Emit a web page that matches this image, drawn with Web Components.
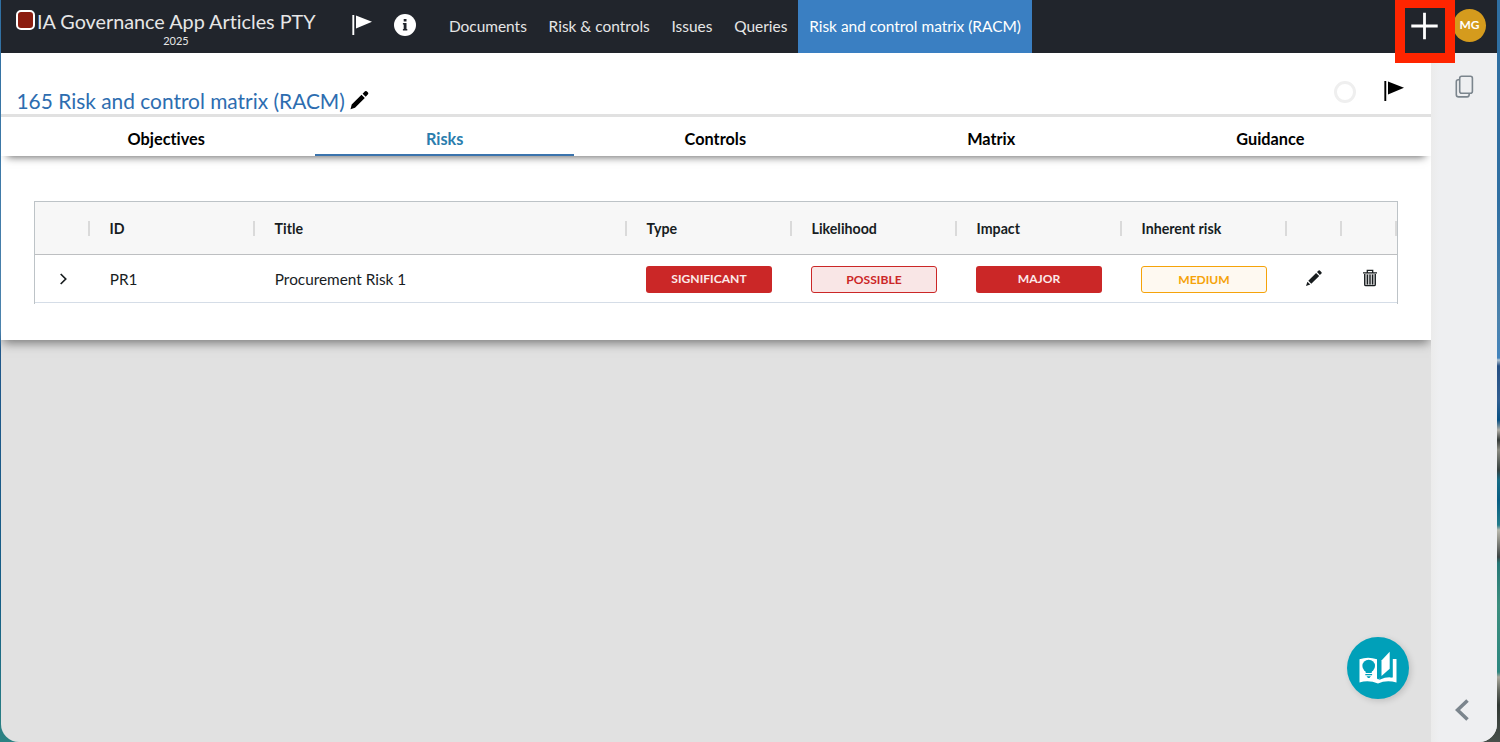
<!DOCTYPE html>
<html lang="en">
<head>
<meta charset="utf-8">
<title>Risk and control matrix (RACM)</title>
<style>
    body {
        margin: 0;
        height: 742px;
        overflow: hidden;
        font-family: Lato, "Liberation Sans", sans-serif;
        font-size: 16px;
        font-variant-ligatures: none;
        color: #181d1f;
    }
</style>
</head>
<body>
<app-window>
    <top-bar slot="header" name="IA Governance App Articles PTY" year="2025" user="MG">
        <nav-item>Documents</nav-item>
        <nav-item>Risk &amp; controls</nav-item>
        <nav-item>Issues</nav-item>
        <nav-item>Queries</nav-item>
        <nav-item active>Risk and control matrix (RACM)</nav-item>
    </top-bar>
    <doc-panel heading="165 Risk and control matrix (RACM)">
        <tab-item slot="tabs">Objectives</tab-item>
        <tab-item slot="tabs" active>Risks</tab-item>
        <tab-item slot="tabs">Controls</tab-item>
        <tab-item slot="tabs">Matrix</tab-item>
        <tab-item slot="tabs">Guidance</tab-item>
        <risk-table></risk-table>
    </doc-panel>
    <help-button slot="help"></help-button>
    <side-bar slot="side"></side-bar>
</app-window>

<script>
const icons = {
    flag: `<svg width="22" height="22" viewBox="0 0 22 22"><path d="M2.3 1v20" stroke="currentColor" stroke-width="1.9"/><path d="M5 1.5 21 7.8 5 14.5z" fill="currentColor"/></svg>`,
    info: `<svg width="22" height="22" viewBox="0 0 22 22"><circle cx="11" cy="11" r="11" fill="#fff"/><path d="M9.7 5h2.8v2.6H9.7zM8.9 9h3.6v6h.8v1.6H8.9V15h.8v-4.4h-.8z" fill="#21252c"/></svg>`,
    plus: `<svg width="28" height="28" viewBox="0 0 28 28"><path d="M13.500 .8v26.400M.3 14h26.400" stroke="#fff" stroke-width="2.800"/></svg>`,
    pen: `<svg width="19" height="20" viewBox="0 0 19 20"><path d="M.5 19.300 1.700 14.500 11.500 4.800l3.300 3.200L5 17.700zM12.600 3.700 15 1.300q.9-.7 1.700 0l1.300 1.300q.7.900 0 1.700L15.700 6.700z" fill="currentColor"/></svg>`,
    pencil: `<svg width="18" height="18" viewBox="0 0 18 18"><path d="M1 17 2.400 12.700 5.300 15.600zM3.300 11.800 11.100 4l3.100 3.100-7.900 7.700zM12 3.100l1.600-1.600q.6-.5 1.200 0l1.700 1.700q.5.600 0 1.200l-1.600 1.600z" fill="currentColor"/></svg>`,
    trash: `<svg width="16" height="18" viewBox="0 0 16 18"><path d="M2.5 4.500h11v12.200h-11z" fill="#d0d1d2"/><path d="M1 3.800h14M5.300 3.600V1.300h5.400v2.300M2.700 5v10.400q0 1.300 1.200 1.300h8.200q1.200 0 1.200-1.300V5M5.400 5.500v10M8 5.500v10M10.600 5.500v10" fill="none" stroke="currentColor" stroke-width="1.300"/></svg>`,
    right: `<svg width="9" height="12" viewBox="0 0 9 12"><path d="m1.700 1 5 5-5 5" fill="none" stroke="currentColor" stroke-width="1.700"/></svg>`,
    left: `<svg width="14" height="22" viewBox="0 0 14 22"><path d="M12.500 1.500 2.500 11l10 9.500" fill="none" stroke="#7b858d" stroke-width="3.600"/></svg>`,
    copy: `<svg width="20" height="24" viewBox="0 0 20 24"><rect x="4.700" y="1.300" width="12.700" height="17" rx="2" fill="none" stroke="#7b858d" stroke-width="1.600"/><path d="M4.700 4.800H3.300Q1.300 4.800 1.300 6.700v12.800q0 2.400 2.400 2.400h8.400q2.200 0 2.200-3.400" fill="none" stroke="#7b858d" stroke-width="1.600"/></svg>`,
    book: `<svg width="38" height="34" viewBox="0 0 38 34"><path d="M.5 8.200Q9 5.200 18 8.200V27.500l1.200 1 1.300-1V27q6-2 12.300-.6V8H37.500v23.400Q27 28.500 19 32.600 10 28.500.5 31.400z" fill="#fff"/><path d="M20.300 7.500h13.500v18.900q-7-.9-12 1.800l-1.500.8z" fill="#00a0b9"/><path d="M22.500 9.500 30.700.8v17L22.500 25z" fill="#fff"/><path d="M35 8v19.500" stroke="#fff" stroke-width="1.400"/><circle cx="9.700" cy="15" r="6.300" fill="#00a0b9"/><path d="M6.700 19h6v3h-6zM6.300 23h6.800v1.300H6.300zM7.500 25.200h4.400L10.500 27H9z" fill="#00a0b9"/></svg>`
};

class AppWindow extends HTMLElement {
    constructor() {
        super();
        this.attachShadow({mode: "open"}).innerHTML = `
        <style>
            :host {
                display: block;
                box-sizing: border-box;
                height: 742px;
                padding: 0 3px 0 1px;
                background:
                    linear-gradient(#2f6fa2 0, #2f6fa2 200px, #4c83ad 320px, #4384bd 358px, #b7c7d3 360px, #254f83 366px, #305e91 400px, #075083 420px, #b2afa7 430px, #343a38 440px, #8c8c83 450px, #35403f 470px, #176c85 480px, #075d83 500px, #237c8b 525px, #b9b8ad 530px, #8e8f87 540px, #3c4343 557px, #277776 563px, #3c8e7e 605px, #2d8780 672px, #aaa89d 677px, #646961 690px, #303733 705px, #48504b) right / 20px 100% no-repeat,
                    linear-gradient(#2f6fa2 0, #4c83ad 330px, #20578a 350px, #155e86 600px, #2c8383 742px);
            }
            .window {
                display: grid;
                grid-template: 53px 1fr / 1fr 66px;
                height: 742px;
                border-radius: 0 0 18px 18px;
                overflow: hidden;
                background: #e1e1e1;
            }
            .header { grid-column: 1 / 3; position: relative; z-index: 2; }
            main { position: relative; overflow: hidden; }
            .help { position: absolute; right: 22px; bottom: 43px; }
        </style>
        <div class="window">
            <div class="header"><slot name="header"></slot></div>
            <main><slot></slot><div class="help"><slot name="help"></slot></div></main>
            <slot name="side"></slot>
        </div>`;
    }
}

class TopBar extends HTMLElement {
    constructor() {
        super();
        this.attachShadow({mode: "open"});
    }

    connectedCallback() {
        this.shadowRoot.innerHTML = `
        <style>
            * { box-sizing: border-box; }
            :host {
                display: flex;
                height: 53px;
                background: #21252c;
                color: #e6e6e6;
            }
            svg { display: block; }
            .brand { width: 301px; margin-left: 15px; padding-top: 8px; }
            .name { display: flex; font-size: 19.8px; line-height: 26px; white-space: nowrap; }
            .mark {
                flex: none;
                width: 19px;
                height: 20px;
                margin: 2px 2px 0 0;
                border: 2px solid #fff;
                border-radius: 5px;
                background: #8b1d10;
            }
            .year { width: 320px; text-align: center; font-size: 11px; line-height: 13px; }
            .flag { margin: 14px 0 0 34px; color: #fff; }
            .info { margin: 14px 0 0 21px; }
            nav { display: flex; margin-left: 22px; }
            .end { display: flex; margin-left: auto; }
            .add {
                display: flex;
                justify-content: center;
                width: 60px;
                height: 63px;
                padding-top: 4px;
                border: 10px solid #ff2500;
                border-top-width: 8px;
                z-index: 1;
            }
            .user {
                width: 33px;
                height: 33px;
                margin: 9px 11px 0 -2px;
                border-radius: 50%;
                background: #d59b1d;
                color: #fff;
                font-size: 12px;
                font-weight: 700;
                line-height: 32px;
                text-align: center;
            }
        </style>
        <div class="brand">
            <div class="name"><span class="mark"></span>${this.getAttribute("name")}</div>
            <div class="year">${this.getAttribute("year")}</div>
        </div>
        <div class="flag">${icons.flag}</div>
        <div class="info">${icons.info}</div>
        <nav><slot></slot></nav>
        <div class="end">
            <div class="add">${icons.plus}</div>
            <div class="user">${this.getAttribute("user")}</div>
        </div>`;
    }
}

class NavItem extends HTMLElement {
    constructor() {
        super();
        this.attachShadow({mode: "open"}).innerHTML = `
        <style>
            :host {
                display: block;
                height: 53px;
                padding: 0 10.9px;
                font-size: 15.450px;
                line-height: 52px;
                white-space: nowrap;
            }
            :host([active]) { background: #3a7fc2; color: #fff; }
        </style>
        <slot></slot>`;
    }
}

class DocPanel extends HTMLElement {
    constructor() {
        super();
        this.attachShadow({mode: "open"});
    }

    connectedCallback() {
        this.shadowRoot.innerHTML = `
        <style>
            * { box-sizing: border-box; }
            :host {
                display: block;
                height: 287px;
                background: #fff;
                box-shadow: 0 5px 10px -2px #777;
            }
            svg { display: block; }
            .title {
                display: flex;
                height: 64px;
                padding-left: 15.5px;
                border-bottom: 3px solid #e1e1e1;
            }
            .heading {
                padding-top: 35px;
                color: #2d6db0;
                font-size: 20.9px;
                line-height: 26px;
                white-space: nowrap;
            }
            .pen { margin: 37px 0 0 5px; color: #000; }
            .state {
                width: 22px;
                height: 22px;
                margin: 28px 0 0 auto;
                border: 3px solid #efefef;
                border-radius: 50%;
            }
            .flag { margin: 27px 26px 0 27px; color: #000; }
            .tabs { display: flex; height: 39px; padding: 0 16px; }
            .bar { box-shadow: 0 7px 8px -6px #666; }
            .content { padding: 45px 33px 0; }
        </style>
        <div class="title">
            <div class="heading">${this.getAttribute("heading")}</div>
            <div class="pen">${icons.pen}</div>
            <div class="state"></div>
            <div class="flag">${icons.flag}</div>
        </div>
        <div class="bar"><div class="tabs"><slot name="tabs"></slot></div></div>
        <div class="content"><slot></slot></div>`;
    }
}

class TabItem extends HTMLElement {
    constructor() {
        super();
        this.attachShadow({mode: "open"}).innerHTML = `
        <style>
            :host {
                display: block;
                box-sizing: border-box;
                flex: 1 1 auto;
                height: 39px;
                color: #000;
                font-size: 16.3px;
                font-weight: 700;
                line-height: 44px;
                text-align: center;
            }
            :host([active]) { color: #2a7dad; border-bottom: 2px solid #3b74ad; }
        </style>
        <slot></slot>`;
    }
}

class RiskBadge extends HTMLElement {
    constructor() {
        super();
        this.attachShadow({mode: "open"}).innerHTML = `
        <style>
            :host {
                display: block;
                box-sizing: border-box;
                width: 126px;
                height: 27px;
                border-radius: 3px;
                font-size: 12.1px;
                font-weight: 700;
                line-height: 26px;
                text-align: center;
                background: #cb2727;
                color: #fbe9e9;
            }
            :host([kind="possible"]) { border: 1px solid #cb2727; background: #f9e6e6; color: #cb2727; }
            :host([kind="medium"]) { border: 1px solid #f5a30a; background: #fef9f1; color: #f5a30a; }
        </style>
        <slot></slot>`;
    }
}

class RiskTable extends HTMLElement {
    constructor() {
        super();
        this.shadowDOM = this.attachShadow({mode: "open"});
        this.columns = ["", "ID", "Title", "Type", "Likelihood", "Impact", "Inherent risk", "", ""];
        this.render();
    }

    render() {
        this.shadowDOM.innerHTML = `
        <style>
            * { box-sizing: border-box; }
            :host {
                display: block;
                box-sizing: border-box;
                height: 103px;
                border: 1px solid #bdc3c7;
                border-bottom: 0;
            }
            svg { display: block; }
            .row {
                display: grid;
                grid-template-columns: 55px 165px 372px repeat(4, 165px) 55px 55px;
                align-items: center;
                overflow: hidden;
            }
            .head {
                height: 53px;
                background: #f7f7f7;
                border-bottom: 1px solid #bdbfc1;
                font-size: 14.2px;
                font-weight: 700;
            }
            .head div {
                height: 15px;
                padding-left: 19.6px;
                border-right: 2px solid #dadada;
                line-height: 16px;
            }
            .body { height: 48px; border-bottom: 1px solid #d5dde7; font-size: 15.350px; }
            .body div { padding-left: 19.8px; line-height: 20px; }
            .body risk-badge { margin: 1px 0 0 19px; }
            .body .open { padding-left: 24px; }
            .body .edit { padding: 0 0 2px 18px; }
            .body .delete { padding: 0 0 2px 20px; }
        </style>
        <div class="row head">${this.columns.map(c => `<div>${c}</div>`).join("")}</div>
        <div class="row body">
            <div class="open">${icons.right}</div>
            <div>PR1</div>
            <div>Procurement Risk 1</div>
            <risk-badge>SIGNIFICANT</risk-badge>
            <risk-badge kind="possible">POSSIBLE</risk-badge>
            <risk-badge>MAJOR</risk-badge>
            <risk-badge kind="medium">MEDIUM</risk-badge>
            <div class="edit">${icons.pencil}</div>
            <div class="delete">${icons.trash}</div>
        </div>`;
    }
}

class HelpButton extends HTMLElement {
    constructor() {
        super();
        this.attachShadow({mode: "open"}).innerHTML = `
        <style>
            :host {
                display: flex;
                align-items: center;
                justify-content: center;
                width: 62px;
                height: 62px;
                border-radius: 50%;
                background: #00a0b9;
                box-shadow: 2px 2px 6px rgba(0, 0, 0, .15);
            }
        </style>
        ${icons.book}`;
    }
}

class SideBar extends HTMLElement {
    constructor() {
        super();
        this.attachShadow({mode: "open"}).innerHTML = `
        <style>
            :host {
                display: flex;
                box-sizing: border-box;
                flex-direction: column;
                justify-content: space-between;
                padding: 22px 0 21px 24px;
                background: linear-gradient(90deg, #ebebeb, #eeeff1 8px);
            }
            svg { display: block; }
        </style>
        ${icons.copy}${icons.left}`;
    }
}

customElements.define("app-window", AppWindow);
customElements.define("top-bar", TopBar);
customElements.define("nav-item", NavItem);
customElements.define("doc-panel", DocPanel);
customElements.define("tab-item", TabItem);
customElements.define("risk-badge", RiskBadge);
customElements.define("risk-table", RiskTable);
customElements.define("help-button", HelpButton);
customElements.define("side-bar", SideBar);
</script>
</body>
</html>
